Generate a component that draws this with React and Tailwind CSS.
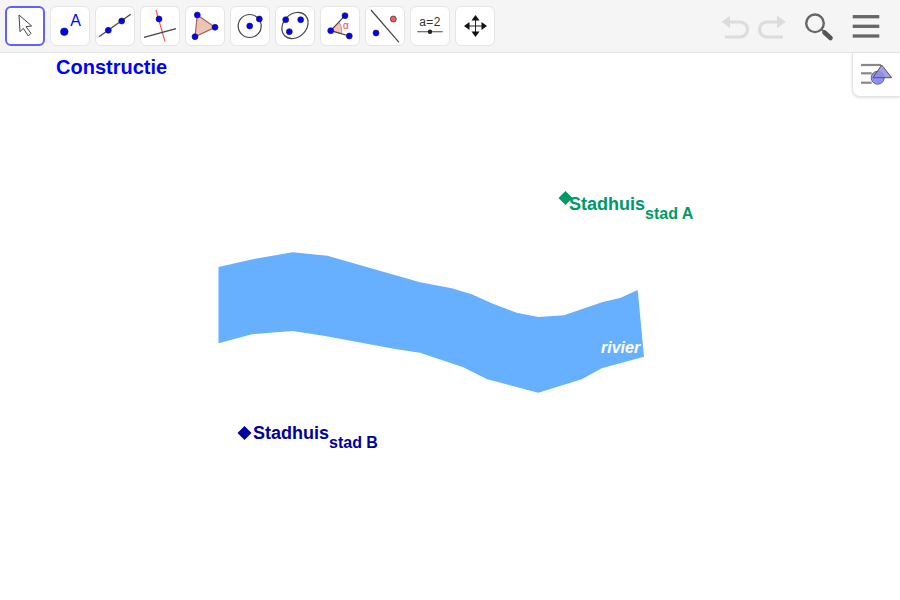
const blue = '#0000ff';

function Dot({ x, y, r = 3, fill = blue }) {
  return <circle cx={x} cy={y} r={r} fill={fill} stroke="#1a1a4a" strokeWidth="0.6" />;
}

const tools = [
  <path d="M14 9 L26.7 20 L21 20.7 L26 27.3 L23.3 30 L18.3 22.3 L15 25.7 Z" fill="#fff" stroke="#444" strokeWidth="1" strokeLinejoin="round" />,
  <>
    <Dot x={14.3} y={25.7} r={3.8} />
    <text x={25.7} y={19.5} textAnchor="middle" fontSize="16" fill={blue} fontFamily="Liberation Sans">A</text>
  </>,
  <>
    <line x1={4} y1={30.7} x2={35.7} y2={8.3} stroke="#444" strokeWidth="1.2" />
    <Dot x={13.3} y={24.3} />
    <Dot x={26.7} y={15} />
  </>,
  <>
    <line x1={16} y1={4} x2={25} y2={35.7} stroke="#f55" strokeWidth="1.2" />
    <line x1={4} y1={31.3} x2={36} y2={22.7} stroke="#444" strokeWidth="1.2" />
    <Dot x={19} y={13} />
  </>,
  <>
    <polygon points="12.3,9 30,21.3 10,30.7" fill="#eec4b8" stroke="#a8604f" strokeWidth="1.2" />
    <Dot x={12.3} y={9} />
    <Dot x={30} y={21.3} />
    <Dot x={10} y={30.7} />
  </>,
  <>
    <circle cx={19.7} cy={20} r={11.5} fill="none" stroke="#444" strokeWidth="1.2" />
    <Dot x={19.7} y={20} />
    <Dot x={29.3} y={13} />
  </>,
  <>
    <ellipse cx={20} cy={19.5} rx={14.5} ry={11.5} fill="none" stroke="#444" strokeWidth="1.2" transform="rotate(-45 20 19.5)" />
    <Dot x={10.7} y={13.7} />
    <Dot x={25.7} y={13.7} />
    <Dot x={14.3} y={25.7} />
  </>,
  <>
    <path d="M10.7 24.7 L19 16 Q23 22 21.5 27.8 Z" fill="#f2c4ba" stroke="#f66" strokeWidth="0.7" />
    <line x1={10.7} y1={24.7} x2={25} y2={9.7} stroke="#444" strokeWidth="1.2" />
    <line x1={10.7} y1={24.7} x2={29.3} y2={30} stroke="#444" strokeWidth="1.2" />
    <text x={26} y={23} textAnchor="middle" fontSize="10" fill="#f44" fontFamily="Liberation Sans">α</text>
    <Dot x={10.7} y={24.7} />
    <Dot x={25} y={9.7} />
    <Dot x={29.3} y={30} />
  </>,
  <>
    <line x1={6} y1={4} x2={34} y2={36.3} stroke="#444" strokeWidth="1.2" />
    <Dot x={28.3} y={13} fill="#f55" />
    <Dot x={11} y={27} />
  </>,
  <>
    <text x={20} y={20} textAnchor="middle" fontSize="12" letterSpacing="0.4" fill="#333" fontFamily="Liberation Sans">a=2</text>
    <line x1={7.3} y1={25.7} x2={32.7} y2={25.7} stroke="#666" strokeWidth="1.2" />
    <circle cx={20} cy={25.7} r={2.2} fill="#222" />
  </>,
  <>
    <line x1={20.5} y1={11} x2={20.5} y2={29} stroke="#222" />
    <line x1={11.5} y1={20} x2={29.5} y2={20} stroke="#222" />
    <polygon points="20.5,9 16.5,14.5 24.5,14.5" fill="#111" />
    <polygon points="20.5,31 16.5,25.5 24.5,25.5" fill="#111" />
    <polygon points="9,20 14.5,16 14.5,24" fill="#111" />
    <polygon points="32,20 26.5,16 26.5,24" fill="#111" />
  </>,
];

const riverPoints = [
  '218.5,267', '255,258.7', '292.7,252.3', '327.3,255.7', '420,282.3', '451.7,288.3', '471.7,294.3',
  '491.7,303.3', '516.7,312.7', '538.3,317', '564,315.3', '602.7,302', '620,298', '637.7,290',
  '644,356.7', '601.7,368.3', '581.7,379.3', '538.3,392.7', '486.7,379', '463.3,367.3', '420,352.7',
  '396.7,349.3', '325,336', '292.7,331', '251.7,334.3', '218.5,343.3',
].join(' ');

export default function App() {
  return (
    <div className="flex h-screen flex-col overflow-hidden bg-white" style={{ fontFamily: '"Liberation Sans", Arial, sans-serif' }}>
      {/* toolbar */}
      <div className="box-content flex h-13 shrink-0 items-center gap-[5px] border-b border-neutral-200 bg-neutral-100 pl-[5px] pr-4">
        {tools.map((icon, i) => (
          <button
            key={i}
            className={
              i === 0
                ? 'h-10 w-10 rounded-md border-2 border-indigo-500 bg-white'
                : 'h-10 w-10 rounded-md border border-neutral-200 bg-white'
            }
          >
            <svg viewBox="0 0 40 40" className={i === 0 ? '-m-0.5 h-10 w-10' : '-m-px h-10 w-10'}>
              {icon}
            </svg>
          </button>
        ))}

        <div className="ml-auto flex items-center gap-4">
          <div className="flex items-center gap-1">
            <svg viewBox="0 0 32 32" className="h-8 w-8" fill="none" stroke="#dcdcdc" strokeWidth="3.2">
              <path d="M10 12 H20 a7.5 7.5 0 0 1 0 15 H5" />
              <polygon points="1.7,11.7 10,5.7 10,18.3" fill="#dcdcdc" stroke="none" />
            </svg>
            <svg viewBox="0 0 32 32" className="h-8 w-8" fill="none" stroke="#dcdcdc" strokeWidth="3.2">
              <path d="M21 12 H11 a7.5 7.5 0 0 0 0 15 H27" />
              <polygon points="29.7,11.7 21,5.7 21,18.3" fill="#dcdcdc" stroke="none" />
            </svg>
          </div>
          <svg viewBox="0 0 32 32" className="h-8 w-8" fill="none" stroke="#666" strokeLinecap="round">
            <circle cx={11} cy={13.3} r={8.8} strokeWidth="2.4" />
            <line x1={17.5} y1={19.5} x2={20} y2={21.5} strokeWidth="2" />
            <line x1={20.5} y1={22.5} x2={26.5} y2={28} strokeWidth="4.6" stroke="#555" />
          </svg>
          <svg viewBox="0 0 32 32" className="h-8 w-8" stroke="#666" strokeWidth="3.3">
            <line x1={0.7} y1={6.7} x2={27.3} y2={6.7} />
            <line x1={0.7} y1={16.3} x2={27.3} y2={16.3} />
            <line x1={0.7} y1={26} x2={27.3} y2={26} />
          </svg>
        </div>
      </div>

      {/* graphics view */}
      <div className="relative flex-1">
        <svg viewBox="0 53 900 547" className="absolute inset-0 h-full w-full">
          <polygon points={riverPoints} fill="#66b0ff" />
          <polygon points="565.5,191 572.5,198 565.5,205 558.5,198" fill="#009966" />
          <polygon points="244.5,426 251.5,433 244.5,440 237.5,433" fill="#00009a" />
        </svg>

        <h1 className="relative pl-14 text-xl font-bold" style={{ color: blue }}>Constructie</h1>

        <div className="absolute left-[569px] top-[137px] text-lg font-bold text-[#009966]">
          Stadhuis<span className="relative top-2.25 text-base">stad A</span>
        </div>
        <div className="absolute left-[253px] top-[366px] text-lg font-bold text-[#00009a]">
          Stadhuis<span className="relative top-2.25 text-base">stad B</span>
        </div>
        <div className="absolute left-[601px] top-[283px] text-base font-bold italic text-white">rivier</div>

        {/* style bar toggle */}
        <button className="absolute right-0 top-0 h-11 w-12 rounded-bl-lg border-b border-l border-neutral-200 bg-white shadow-sm">
          <svg viewBox="0 0 48 44" className="-ml-px h-11 w-12">
            <g stroke="#888" strokeWidth="2.2">
              <line x1={9} y1={12} x2={29} y2={12} />
              <line x1={9} y1={20.3} x2={19.7} y2={20.3} />
              <line x1={9} y1={29.7} x2={19.7} y2={29.7} />
            </g>
            <circle cx={25.7} cy={24.7} r={6.5} fill="#8f8fff" stroke="#666" />
            <polygon points="29.7,12 39.7,24.7 21,24.7" fill="#8f8fe8" fillOpacity="0.85" stroke="#555" />
          </svg>
        </button>
      </div>
    </div>
  );
}
